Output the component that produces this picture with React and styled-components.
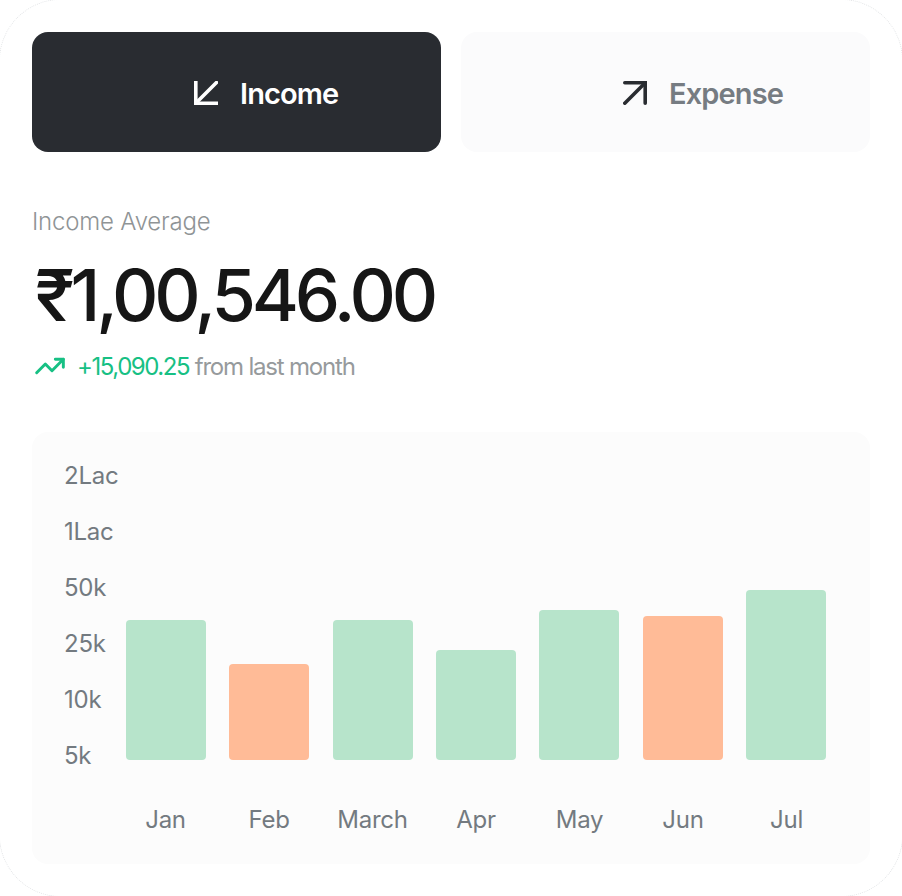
import React from 'react';
import styled, { createGlobalStyle } from 'styled-components';
import { TrendingUp } from 'lucide-react';

const GlobalStyle = createGlobalStyle`
	html, body {
		margin: 0;
		padding: 0;
		background: #fff;
		overflow: hidden;
		font-family: Inter, 'Liberation Sans', sans-serif;
	}
`;

const yLabels = ['2Lac', '1Lac', '50k', '25k', '10k', '5k'];

const months = [
	{ name: 'Jan', height: 140, tone: 'up' },
	{ name: 'Feb', height: 96, tone: 'down' },
	{ name: 'March', height: 140, tone: 'up' },
	{ name: 'Apr', height: 110, tone: 'up' },
	{ name: 'May', height: 150, tone: 'up' },
	{ name: 'Jun', height: 144, tone: 'down' },
	{ name: 'Jul', height: 170, tone: 'up' }
];

export default function App() {
	return (
		<Card>
			<GlobalStyle />
			<Tabs>
				<Tab $active>
					<svg width='24' height='24' viewBox='0 0 24 24' fill='none' stroke='#fff' strokeWidth='3.6'>
						<path d='M1.8 0V22.2H24' />
						<path d='M2.5 21.5L22.5 1.5' strokeLinecap='round' />
					</svg>
					Income
				</Tab>
				<Tab>
					<svg width='24' height='24' viewBox='0 0 24 24' fill='none' stroke='#292c31' strokeWidth='3.6' strokeLinecap='round'>
						<path d='M1.8 1.8H22.2V22.2' />
						<path d='M21.5 2.5L1.8 22.2' />
					</svg>
					Expense
				</Tab>
			</Tabs>
			<Summary>
				<Label>Income Average</Label>
				<Amount>₹1,00,546.00</Amount>
				<Change>
					<TrendingUp size={32} strokeWidth={2.2} color='#17c084' />
					<p>
						<Delta>+15,090.25</Delta> from last month
					</p>
				</Change>
			</Summary>
			<Chart>
				<YAxis>
					{yLabels.map(label => (
						<span key={label}>{label}</span>
					))}
				</YAxis>
				<Plot>
					<Bars>
						{months.map(month => (
							<Bar key={month.name} $height={month.height} $tone={month.tone} />
						))}
					</Bars>
					<Months>
						{months.map(month => (
							<span key={month.name}>{month.name}</span>
						))}
					</Months>
				</Plot>
			</Chart>
		</Card>
	);
}

const Card = styled.div`
	box-sizing: border-box;
	width: 904px;
	height: 898px;
	margin: -1px;
	padding: 32px;
	border: 1px dotted #e2e4e6;
	border-radius: 62px;
	display: flex;
	flex-direction: column;
`;

const Tabs = styled.div`
	display: grid;
	grid-template-columns: 409px 409px;
	gap: 20px;
`;

const Tab = styled.div`
	height: 120px;
	box-sizing: border-box;
	padding: 2px 0 0 162px;
	border-radius: 16px;
	display: flex;
	align-items: center;
	gap: 22px;
	font-size: 29px;
	font-weight: 600;
	letter-spacing: -0.03em;
	background: ${props => (props.$active ? '#292c31' : '#fbfbfc')};
	color: ${props => (props.$active ? '#fff' : '#767c82')};
`;

const Summary = styled.div`
	margin-top: 55px;
`;

const Label = styled.div`
	font-size: 24px;
	line-height: 30px;
	font-weight: 300;
	letter-spacing: -0.008em;
	color: #8f9496;
`;

const Amount = styled.div`
	margin: 18px 0 0 3px;
	font-size: 72px;
	line-height: 80px;
	font-weight: 500;
	letter-spacing: -0.058em;
	color: #161616;
`;

const Change = styled.div`
	margin: 13px 0 0 2px;
	display: flex;
	align-items: center;
	gap: 11px;
	height: 36px;
	font-size: 24px;
	letter-spacing: -0.05em;
	color: #969a9c;

	p {
		margin: 0;
	}
`;

const Delta = styled.span`
	color: #17c084;
	letter-spacing: -0.06em;
`;

const Chart = styled.div`
	margin-top: 48px;
	width: 838px;
	height: 432px;
	box-sizing: border-box;
	padding: 32px 44px 0 32px;
	background: #fcfcfc;
	border-radius: 16px;
	display: flex;
	color: #737a80;
	font-size: 24px;
	line-height: 32px;
	letter-spacing: -0.01em;
`;

const YAxis = styled.div`
	width: 62px;
	display: flex;
	flex-direction: column;
	gap: 24px;
	margin-top: -4px;
`;

const Plot = styled.div`
	flex: 1;
	display: flex;
	flex-direction: column;
`;

const Bars = styled.div`
	height: 296px;
	display: flex;
	justify-content: space-between;
	align-items: flex-end;
`;

const Bar = styled.div`
	width: 80px;
	height: ${props => props.$height}px;
	border-radius: 4px;
	background: ${props => (props.$tone === 'up' ? '#b7e4cb' : '#ffbb97')};
`;

const Months = styled.div`
	margin-top: 44px;
	display: flex;
	justify-content: space-between;

	span {
		width: 79px;
		text-align: center;
	}
`;
